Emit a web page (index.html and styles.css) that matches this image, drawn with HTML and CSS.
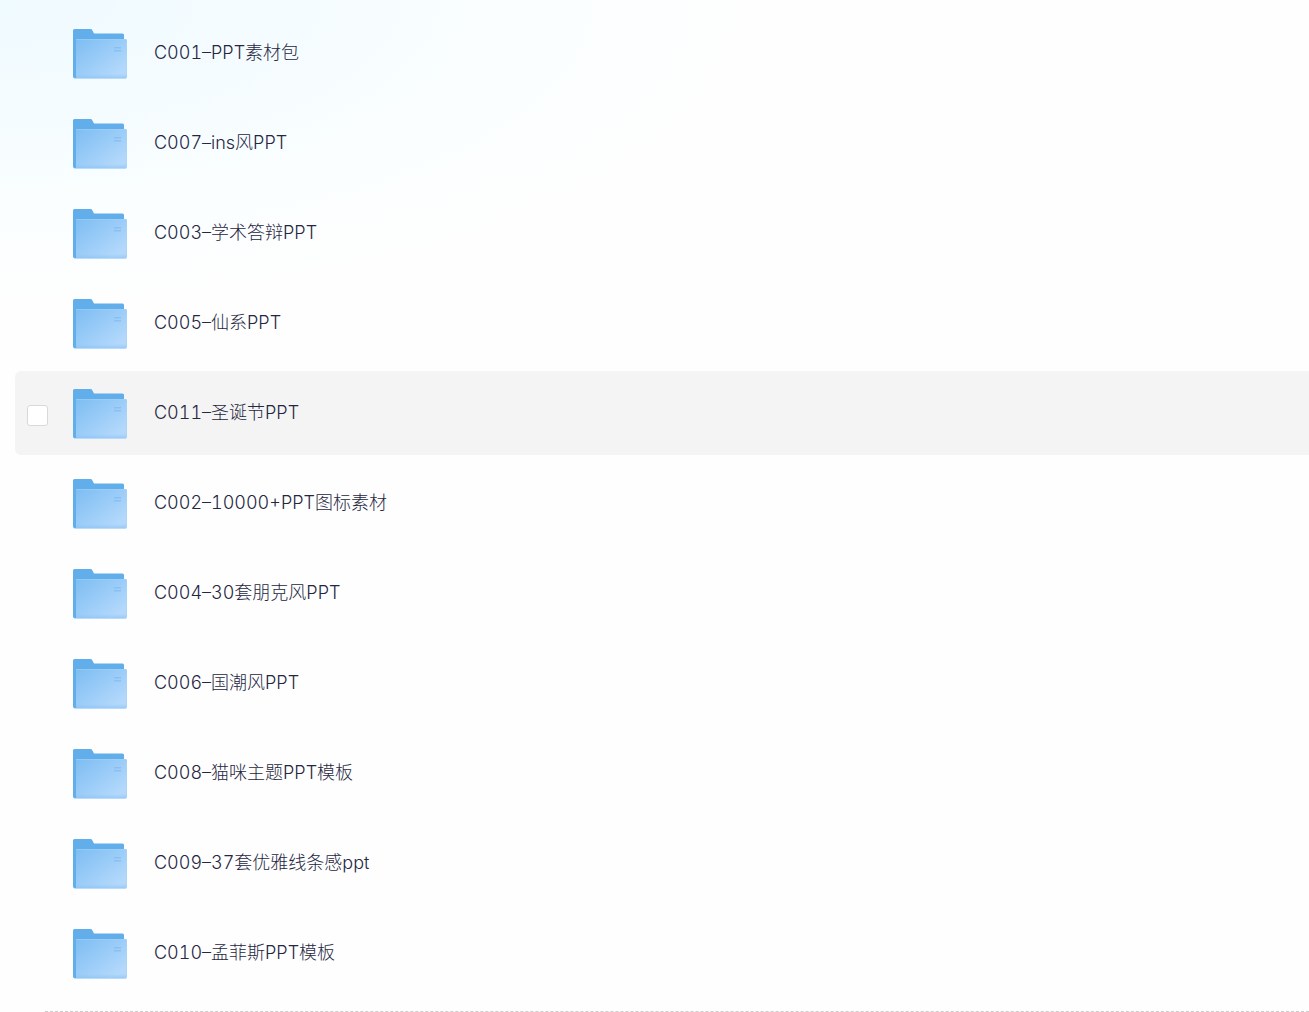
FILE: index.html
```html
<!DOCTYPE html>
<html lang="zh-CN">
<head>
<meta charset="UTF-8" />
<meta name="viewport" content="width=device-width, initial-scale=1" />
<title>PPT</title>
<link rel="stylesheet" href="styles.css">
</head>
<body>

<svg class="defs" aria-hidden="true">
  <defs>
    <linearGradient id="front" x1="0" y1="0" x2="1" y2="1">
      <stop offset="0" stop-color="#7dbdf2" />
      <stop offset="0.5" stop-color="#9ccdf8" />
      <stop offset="0.85" stop-color="#b3d8fb" />
    </linearGradient>
    <linearGradient id="shade" x1="0" y1="0" x2="0" y2="1">
      <stop offset="0" stop-color="#84bdf2" stop-opacity="0" />
      <stop offset="1" stop-color="#84bdf2" stop-opacity="0.5" />
    </linearGradient>
    <symbol id="folder" viewBox="0 0 54 50">
      <path fill="#62aeeb" d="M0 1.5Q0 0 1.5 0H17.5Q18.8 0 19.3 1.2L21 4.5H49.5Q51 4.5 51 6V30H10V49H1.5Q0 49 0 47.5Z" />
      <path fill="url(#front)" d="M3 10H52.5Q54 10 54 11.5V47.5Q54 49 52.5 49H3Z" />
      <path fill="none" stroke="#a5d3f8" stroke-opacity="0.5" d="M3 10.5H52.5Q53.5 10.5 53.5 11.5V46" />
      <path fill="url(#shade)" d="M3 45H54V47.5Q54 49 52.5 49H3Z" />
      <path fill="#b9dcfb" d="M1 49H53.5L53 50H1.5Z" />
      <path fill="#86bcf3" fill-opacity="0.8" d="M41 18H48V19.5H41ZM41 21H48V22.5H41Z" />
    </symbol>
  </defs>
</svg>

<main class="file-page">
  <ul class="file-list">
    <li class="file-row">
      <input type="checkbox" class="file-check" aria-labelledby="f1" />
      <svg class="file-icon"><use href="#folder" /></svg>
      <a class="file-name" id="f1" href="#">C001–PPT素材包</a>
    </li>
    <li class="file-row">
      <input type="checkbox" class="file-check" aria-labelledby="f2" />
      <svg class="file-icon"><use href="#folder" /></svg>
      <a class="file-name" id="f2" href="#">C007–ins风PPT</a>
    </li>
    <li class="file-row">
      <input type="checkbox" class="file-check" aria-labelledby="f3" />
      <svg class="file-icon"><use href="#folder" /></svg>
      <a class="file-name" id="f3" href="#">C003–学术答辩PPT</a>
    </li>
    <li class="file-row">
      <input type="checkbox" class="file-check" aria-labelledby="f4" />
      <svg class="file-icon"><use href="#folder" /></svg>
      <a class="file-name" id="f4" href="#">C005–仙系PPT</a>
    </li>
    <li class="file-row active">
      <input type="checkbox" class="file-check" aria-labelledby="f5" />
      <svg class="file-icon"><use href="#folder" /></svg>
      <a class="file-name" id="f5" href="#">C011–圣诞节PPT</a>
    </li>
    <li class="file-row">
      <input type="checkbox" class="file-check" aria-labelledby="f6" />
      <svg class="file-icon"><use href="#folder" /></svg>
      <a class="file-name" id="f6" href="#">C002–10000+PPT图标素材</a>
    </li>
    <li class="file-row">
      <input type="checkbox" class="file-check" aria-labelledby="f7" />
      <svg class="file-icon"><use href="#folder" /></svg>
      <a class="file-name" id="f7" href="#">C004–30套朋克风PPT</a>
    </li>
    <li class="file-row">
      <input type="checkbox" class="file-check" aria-labelledby="f8" />
      <svg class="file-icon"><use href="#folder" /></svg>
      <a class="file-name" id="f8" href="#">C006–国潮风PPT</a>
    </li>
    <li class="file-row">
      <input type="checkbox" class="file-check" aria-labelledby="f9" />
      <svg class="file-icon"><use href="#folder" /></svg>
      <a class="file-name" id="f9" href="#">C008–猫咪主题PPT模板</a>
    </li>
    <li class="file-row">
      <input type="checkbox" class="file-check" aria-labelledby="f10" />
      <svg class="file-icon"><use href="#folder" /></svg>
      <a class="file-name" id="f10" href="#">C009–37套优雅线条感ppt</a>
    </li>
    <li class="file-row">
      <input type="checkbox" class="file-check" aria-labelledby="f11" />
      <svg class="file-icon"><use href="#folder" /></svg>
      <a class="file-name" id="f11" href="#">C010–孟菲斯PPT模板</a>
    </li>
  </ul>
  <hr class="list-end" />
</main>

</body>
</html>
```
FILE: styles.css
```css
* {
  box-sizing: border-box;
}
body {
  margin: 0;
  font-family: Inter, "Noto Sans CJK SC", sans-serif;
  font-weight: 300;
  font-variant-numeric: tabular-nums;
  background: #fefefe radial-gradient(ellipse 780px 310px at 0 0, #effaff 0%, #f5fcff 40%, #fafeff 65%, #fefefe 100%) no-repeat;
  color: #25263f;
}
.defs {
  display: block;
  width: 0;
  height: 0;
}
.file-page {
  padding: 11px 0 0 15px;
}

/* Folder list */
.file-list {
  display: flex;
  flex-direction: column;
  gap: 6px;
  margin: 0;
  padding: 0;
  list-style: none;
}
.file-row {
  display: flex;
  align-items: center;
  height: 84px;
  padding: 2px 12px 0;
  border-radius: 6px 0 0 6px;
}
.file-row.active {
  background: #f4f4f4;
}
.file-check {
  appearance: none;
  flex-shrink: 0;
  width: 21px;
  height: 21px;
  margin: 2px 25px 0 0;
  border: 1px solid #d9d9d9;
  border-radius: 3px;
  background: #fff;
  cursor: pointer;
  opacity: 0;
}
.file-row:hover .file-check,
.file-row.active .file-check,
.file-check:checked {
  opacity: 1;
}
.file-check:checked {
  background: #62aeeb;
}
.file-icon {
  flex-shrink: 0;
  width: 54px;
  height: 50px;
  margin-right: 27px;
}
.file-name {
  padding-bottom: 2px;
  font-size: 18px;
  line-height: 26px;
  color: inherit;
  text-decoration: none;
}

.list-end {
  margin: 16px 0 0 30px;
  border: 0;
  border-top: 1px dashed #ccc;
}
```
